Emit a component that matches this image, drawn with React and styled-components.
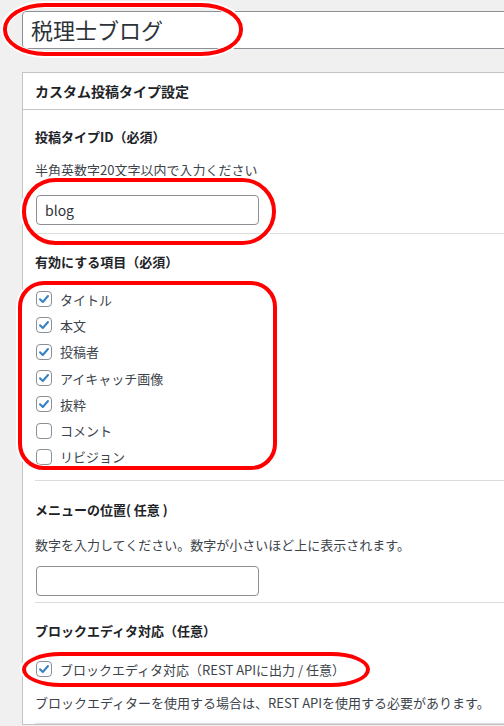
import React from 'react';
import styled, { createGlobalStyle } from 'styled-components';

const GlobalStyle = createGlobalStyle`
  body {
    margin: 0;
    background: #f0f0f1;
    font-family: "Noto Sans CJK JP", "Noto Sans", sans-serif;
    color: #3c434a;
  }
`;

const Page = styled.div`
  width: 504px;
  height: 726px;
  overflow: hidden;
  padding: 11px 0 0 22px;
  box-sizing: border-box;
`;

const TitleWrap = styled.div`
  position: relative;
  width: 520px;
`;

const TitleInput = styled.div`
  height: 38px;
  box-sizing: border-box;
  border: 1px solid #8c8f94;
  border-radius: 4px 0 0 4px;
  background: #fff;
  padding: 0 0 2px 8px;
  display: flex;
  align-items: center;
  font-size: 22px;
  color: #2c3338;
`;

const Ring = styled.div`
  position: absolute;
  box-sizing: border-box;
  border: 4px solid #f00;
  box-shadow: 0 0 0 2px #fff, inset 0 0 0 1px #fff;
  pointer-events: none;
  z-index: 2;
`;

const Panel = styled.div`
  margin-top: 23px;
  width: 520px;
  background: #fff;
  border: 1px solid #c3c4c7;
`;

const PanelHeader = styled.div`
  height: 36px;
  border-bottom: 1px solid #c3c4c7;
  padding: 0 12px;
  display: flex;
  align-items: center;
  font-size: 14px;
  font-weight: 700;
  color: #1d2327;
`;

const Body = styled.div`
  padding-left: 12px;
`;

const Section = styled.div`
  border-bottom: 1px solid #dcdcde;
  padding: ${p => p.$pad || '18px 0 8px'};
`;

const Label = styled.div`
  font-size: 13px;
  font-weight: 700;
  line-height: 20px;
  color: #1d2327;
  margin-bottom: ${p => p.$gap || '13px'};
`;

const Desc = styled.div`
  font-size: 13px;
  line-height: 20px;
  color: #3c434a;
  margin-top: ${p => p.$top || '0'};
  margin-bottom: ${p => p.$gap || '0'};
  white-space: nowrap;
`;

const FieldWrap = styled.div`
  position: relative;
  width: 223px;
  margin-left: 1px;
`;

const TextField = styled.div`
  height: 30px;
  box-sizing: border-box;
  border: 1px solid #8c8f94;
  border-radius: 4px;
  padding: 0 8px;
  display: flex;
  align-items: center;
  font-size: 14px;
  color: #2c3338;
`;

const CheckList = styled.div`
  position: relative;
  width: ${p => p.$w || '240px'};
`;

const CheckRow = styled.div`
  position: relative;
  height: 26.3px;
  display: flex;
  align-items: center;
  gap: 8px;
  font-size: 13px;
  color: #3c434a;
  white-space: nowrap;
`;

const Box = styled.span`
  flex: none;
  width: 16px;
  height: 16px;
  box-sizing: border-box;
  border: 1px solid #8c8f94;
  border-radius: 4px;
  background: #fff;
  display: flex;
  align-items: center;
  justify-content: center;
  margin-left: 1px;
`;

const Check = ({ on }) => (
  <Box>
    {on && (
      <svg width="12" height="12" viewBox="0 0 12 12">
        <path d="M2 6.2 L4.8 9 L10 3" fill="none" stroke="#3582c4" strokeWidth="2" strokeLinecap="round" strokeLinejoin="round" />
      </svg>
    )}
  </Box>
);

const items = [
  ['タイトル', true],
  ['本文', true],
  ['投稿者', true],
  ['アイキャッチ画像', true],
  ['抜粋', true],
  ['コメント', false],
  ['リビジョン', false],
];

export default function App() {
  return (
    <Page>
      <GlobalStyle />
      <TitleWrap>
        <TitleInput>税理士ブログ</TitleInput>
        <Ring style={{ left: -19, top: -8, width: 240, height: 53, borderRadius: '42px / 26px' }} />
      </TitleWrap>
      <Panel>
        <PanelHeader>カスタム投稿タイプ設定</PanelHeader>
        <Body>
          <Section $pad="17px 0 8px">
            <Label>投稿タイプID（必須）</Label>
            <Desc $gap="15px">半角英数字20文字以内で入力ください</Desc>
            <FieldWrap>
              <TextField>blog</TextField>
              <Ring style={{ left: -14, top: -17, width: 254, height: 67, borderRadius: 34 }} />
            </FieldWrap>
          </Section>
          <Section $pad="18px 0 10px">
            <Label $gap="14px">有効にする項目（必須）</Label>
            <CheckList>
              {items.map(([t, on]) => (
                <CheckRow key={t}>
                  <Check on={on} />
                  {t}
                </CheckRow>
              ))}
              <Ring style={{ left: -17, top: -5, width: 259, height: 189, borderRadius: 26 }} />
            </CheckList>
          </Section>
          <Section $pad="19px 0 6px">
            <Label $gap="15px">メニューの位置( 任意 )</Label>
            <Desc $gap="11px">数字を入力してください。数字が小さいほど上に表示されます。</Desc>
            <FieldWrap>
              <TextField />
            </FieldWrap>
          </Section>
          <Section $pad="18px 0 10px">
            <Label $gap="15px">ブロックエディタ対応（任意）</Label>
            <CheckList $w="330px">
              <CheckRow>
                <Check on />
                ブロックエディタ対応（REST APIに出力 / 任意）
                <Ring style={{ left: -13, top: -4, width: 348, height: 35, borderRadius: '40px / 18px' }} />
              </CheckRow>
            </CheckList>
            <Desc $top="11px">ブロックエディターを使用する場合は、REST APIを使用する必要があります。</Desc>
          </Section>
        </Body>
      </Panel>
    </Page>
  );
}
